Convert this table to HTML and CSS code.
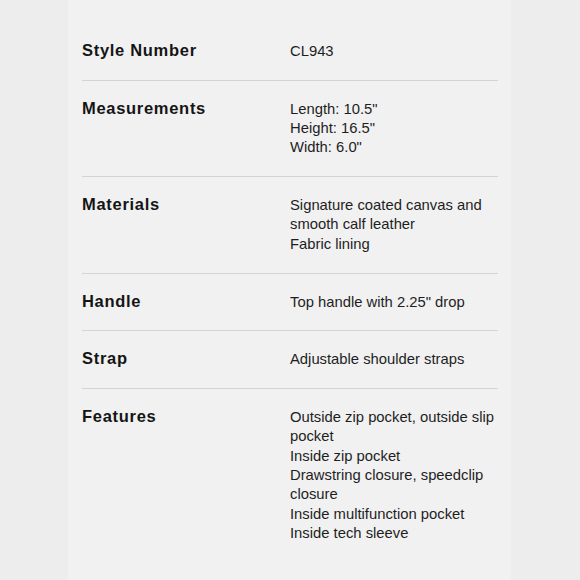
FILE: index.html
```html
<!DOCTYPE html>
<html lang="en">
<head>
<meta charset="utf-8">
<title>Product details</title>
<link rel="stylesheet" href="styles.css">
</head>
<body>
<div class="sheet">
  <div class="row">
    <div class="label">Style Number</div>
    <div class="value">CL943</div>
  </div>
  <div class="row">
    <div class="label">Measurements</div>
    <div class="value">Length: 10.5"<br>Height: 16.5"<br>Width: 6.0"</div>
  </div>
  <div class="row">
    <div class="label">Materials</div>
    <div class="value">Signature coated canvas and smooth calf leather<br>Fabric lining</div>
  </div>
  <div class="row">
    <div class="label">Handle</div>
    <div class="value">Top handle with 2.25" drop</div>
  </div>
  <div class="row">
    <div class="label">Strap</div>
    <div class="value">Adjustable shoulder straps</div>
  </div>
  <div class="row last">
    <div class="label">Features</div>
    <div class="value">Outside zip pocket, outside slip pocket<br>Inside zip pocket<br>Drawstring closure, speedclip closure<br>Inside multifunction pocket<br>Inside tech sleeve</div>
  </div>
</div>
</body>
</html>
```
FILE: styles.css
```css
html, body {
  margin: 0;
  padding: 0;
  background: #ededed;
}
body {
  font-family: "Liberation Sans", Arial, Helvetica, sans-serif;
  color: #1c1c1c;
}
.sheet {
  box-sizing: border-box;
  width: 443px;
  min-height: 580px;
  margin-left: 68px;
  padding: 23px 13px 0 14px;
  background: #f1f1f1;
}
.row {
  display: flex;
  align-items: baseline;
  padding: 18px 0 18.5px;
  border-bottom: 1px solid #d4d4d4;
  line-height: 19.3px;
}
.row.last {
  border-bottom: none;
}
.label {
  flex: 0 0 208px;
  font-size: 16.5px;
  font-weight: bold;
  letter-spacing: 0.7px;
  color: #151515;
}
.value {
  flex: 1 1 auto;
  font-size: 14.8px;
  color: #1e1e1e;
}
```
